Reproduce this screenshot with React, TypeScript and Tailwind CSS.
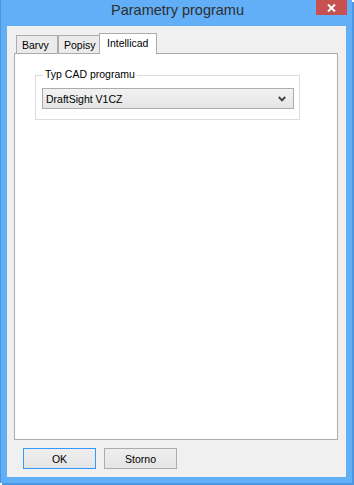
const ui = { fontFamily: '"Liberation Sans", Arial, sans-serif' };

export default function App() {
  return (
    <div className="w-[354px] h-[485px] bg-white" style={ui}>
      {/* Window frame */}
      <div className="w-[352px] h-[483px] bg-[#62aef7] border-l border-[#4b94de] shadow-[2px_2px_0_0_#4d97e2] flex flex-col">
        {/* Title bar */}
        <div className="relative h-[26px] flex items-center justify-center">
          <span className="text-[14.5px] text-[#2e2e2e] pb-[4px] pl-[2px]">Parametry programu</span>
          <div className="absolute top-0 right-[5px] w-[31px] h-[15px] bg-[#c75050] flex items-center justify-center">
            <svg width="9" height="8" viewBox="0 0 9 8">
              <path d="M1 0.5 L8 7.5 M8 0.5 L1 7.5" stroke="#fff" strokeWidth="2" />
            </svg>
          </div>
        </div>

        {/* Client area */}
        <div className="ml-[6px] w-[339px] h-[451px] bg-[#f0f0f0] pt-[7px] pl-[7px] text-[10.5px] text-black">
          {/* Tabs */}
          <div className="flex items-end h-[20px] pl-[2px]">
            <div className="w-[42px] h-[18px] border border-b-0 border-[#acacac] bg-[#ebebeb] pl-[5px] pt-[3px] leading-[12px]">
              Barvy
            </div>
            <div className="w-[42px] h-[18px] border border-b-0 border-[#acacac] bg-[#ebebeb] pl-[5px] pt-[3px] leading-[12px]">
              Popisy
            </div>
            <div className="relative z-10 -ml-px -mb-px w-[58px] h-[21px] border border-b-0 border-[#acacac] bg-white pl-[7px] pt-[3px] leading-[12px]">
              Intellicad
            </div>
          </div>

          {/* Tab panel */}
          <div className="w-[324px] h-[387px] border border-[#acacac] bg-white pt-[21px] pl-[20px]">
            <div className="relative w-[265px] h-[45px] border border-[#dcdcdc] pt-[12px] pl-[6px]">
              <span className="absolute -top-[8px] left-[7px] bg-white px-[2px] leading-[12px]">Typ CAD programu</span>
              <div className="w-[252px] h-[21px] border border-[#acacac] bg-gradient-to-b from-[#f2f2f2] to-[#e5e5e5] flex items-center justify-between pl-[3px] pr-[7px]">
                <span className="leading-[12px]">DraftSight V1CZ</span>
                <svg width="8" height="6" viewBox="0 0 8 6">
                  <path d="M0.8 1 L4 4.3 L7.2 1" stroke="#404040" strokeWidth="1.9" fill="none" />
                </svg>
              </div>
            </div>
          </div>

          {/* Buttons */}
          <div className="flex gap-[8px] mt-[8px] ml-[9px]">
            <button className="w-[73px] h-[21px] border border-[#3399ff] bg-gradient-to-b from-[#eeeeee] to-[#e5e5e5] leading-[12px]">
              OK
            </button>
            <button className="w-[73px] h-[21px] border border-[#acacac] bg-gradient-to-b from-[#eeeeee] to-[#e5e5e5] leading-[12px]">
              Storno
            </button>
          </div>
        </div>
      </div>
    </div>
  );
}
